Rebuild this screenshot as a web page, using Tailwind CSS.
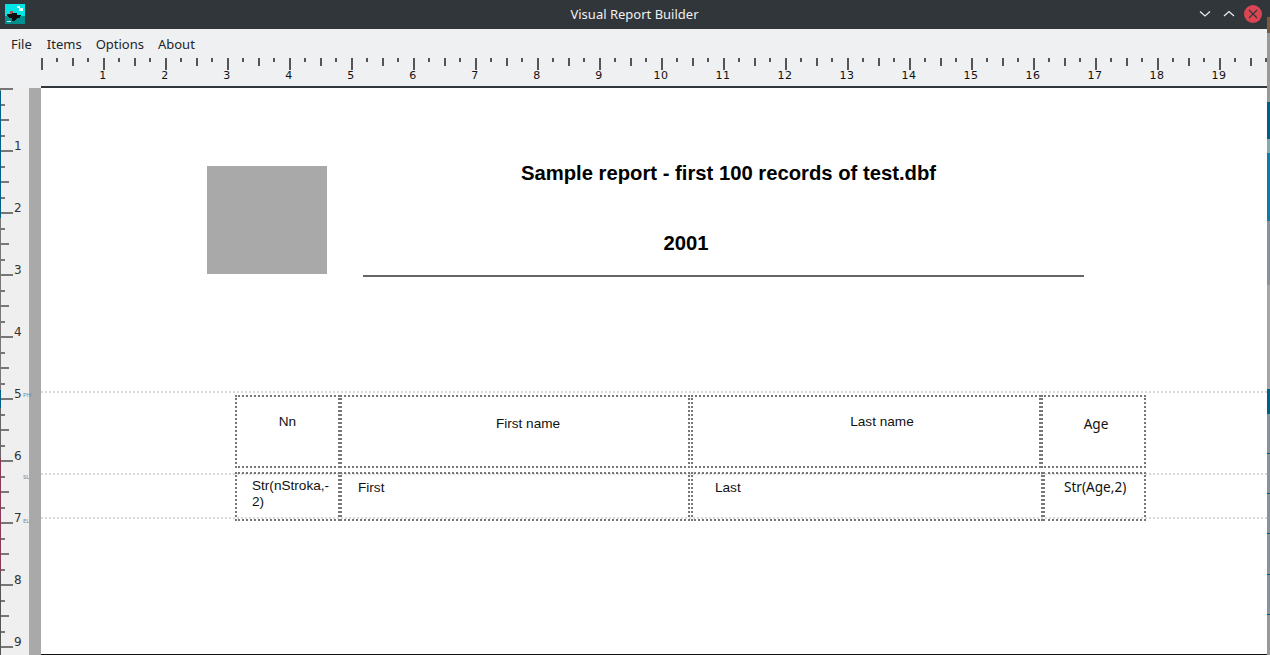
<!DOCTYPE html>
<html lang="en">
<head>
    <meta charset="UTF-8">
    <script src="https://cdn.jsdelivr.net/npm/@tailwindcss/browser@4"></script>
    <title>Visual Report Builder</title>
</head>
<body class="bg-[#31363b]">
<div class="w-[1270px] h-[655px] flex overflow-hidden font-['Noto_Sans',sans-serif]">
<div class="w-[1267px] h-[655px] shrink-0 flex flex-col">
    <!-- title bar -->
    <div class="h-[29px] shrink-0 bg-[#31363b] flex items-center relative">
        <svg class="absolute left-[5px] top-[4px]" width="20" height="20" viewBox="0 0 20 20" shape-rendering="crispEdges">
            <rect width="20" height="20" fill="#00e6e6"/>
            <rect y="12" width="20" height="8" fill="#009090"/>
            <rect x="12" y="2" width="3" height="2" fill="#e8ffff"/>
            <rect x="14" y="4" width="4" height="3" fill="#e8ffff"/>
            <rect x="2" y="17" width="4" height="1" fill="#c0f0f0"/>
            <rect x="5" y="7" width="3" height="3" fill="#b05050"/>
            <path d="M2 10h5v-1h5v2h4l-1 3h-3l-2 3h-3v-3h-3l-2-2z" fill="#101010"/>
        </svg>
        <div class="w-full text-center text-[13px] text-[#eff0f1] pl-[2px]">Visual Report Builder</div>
        <svg class="absolute left-[1199px] top-[10px]" width="12" height="8" viewBox="0 0 12 8"><path d="M1 1.5l5 4.5 5-4.5" fill="none" stroke="#eff0f1" stroke-width="1.2"/></svg>
        <svg class="absolute left-[1223px] top-[10px]" width="12" height="8" viewBox="0 0 12 8"><path d="M1 6l5-4.5L11 6" fill="none" stroke="#eff0f1" stroke-width="1.2"/></svg>
        <div class="absolute left-[1244px] top-[5px] w-[18px] h-[18px] rounded-full bg-[#da4453] flex items-center justify-center">
            <svg width="10" height="10" viewBox="0 0 10 10"><path d="M1 1l8 8M9 1l-8 8" stroke="#31363b" stroke-width="1.2"/></svg>
        </div>
    </div>

    <!-- menu bar -->
    <div class="h-[29px] shrink-0 bg-[#eff0f1] flex items-center pl-[4px] pt-[2px] text-[13px] text-[#232629]">
        <span class="pl-[7px] pr-[8px]">File</span>
        <span class="px-[7px]">Items</span>
        <span class="px-[7px]">Options</span>
        <span class="px-[7px]">About</span>
    </div>

    <!-- top ruler -->
    <div class="h-[30px] shrink-0 bg-[#eff0f1] flex">
        <div class="w-[41px] shrink-0"></div>
        <div class="flex-1 relative border-b-2 border-[#31363b]">
            <svg class="absolute left-0 top-0" width="1226" height="14">
                <defs>
                    <pattern id="hticks" width="62" height="14" patternUnits="userSpaceOnUse">
                        <rect x="0" y="0" width="2" height="12" fill="#555"/>
                        <rect x="15" y="0" width="2" height="4" fill="#555"/>
                        <rect x="31" y="0" width="2" height="8" fill="#555"/>
                        <rect x="46" y="0" width="2" height="4" fill="#555"/>
                    </pattern>
                </defs>
                <rect width="1226" height="14" fill="url(#hticks)"/>
            </svg>
            <div class="absolute left-[31px] top-[10px] flex text-[11px] tracking-[0.5px] text-[#111] font-['DejaVu_Sans',sans-serif]">
                <span class="w-[62px] text-center">1</span><span class="w-[62px] text-center">2</span><span class="w-[62px] text-center">3</span><span class="w-[62px] text-center">4</span><span class="w-[62px] text-center">5</span><span class="w-[62px] text-center">6</span><span class="w-[62px] text-center">7</span><span class="w-[62px] text-center">8</span><span class="w-[62px] text-center">9</span><span class="w-[62px] text-center">10</span><span class="w-[62px] text-center">11</span><span class="w-[62px] text-center">12</span><span class="w-[62px] text-center">13</span><span class="w-[62px] text-center">14</span><span class="w-[62px] text-center">15</span><span class="w-[62px] text-center">16</span><span class="w-[62px] text-center">17</span><span class="w-[62px] text-center">18</span><span class="w-[62px] text-center">19</span>
            </div>
        </div>
    </div>

    <div class="flex flex-1 min-h-0">
        <!-- desktop showing at the window's left edge -->
        <div class="w-px shrink-0 flex flex-col bg-[#555]">
            <div class="h-[3px] bg-[#777]"></div>
            <div class="h-[127px] bg-[#005f87]"></div>
            <div class="h-[172px] bg-[#777]"></div>
            <div class="h-[18px] bg-[#005f87]"></div>
            <div class="h-[50px] bg-[#666]"></div>
            <div class="h-[114px] bg-[#8a3a55]"></div>
        </div>
        <!-- left ruler -->
        <div class="w-[28px] shrink-0 bg-[#efefef] relative">
            <svg class="absolute left-0 top-0" width="28" height="567">
                <defs>
                    <pattern id="vticks" width="28" height="62" patternUnits="userSpaceOnUse">
                        <rect x="0" y="0" width="12" height="2" fill="#777"/>
                        <rect x="0" y="16" width="4" height="2" fill="#777"/>
                        <rect x="0" y="31" width="8" height="2" fill="#777"/>
                        <rect x="0" y="47" width="4" height="2" fill="#777"/>
                    </pattern>
                </defs>
                <rect width="28" height="567" fill="url(#vticks)"/>
            </svg>
            <div class="absolute left-[13px] top-[49px] flex flex-col text-[12px] text-[#333] font-['DejaVu_Sans',sans-serif]">
                <span class="h-[62px]">1</span><span class="h-[62px]">2</span><span class="h-[62px]">3</span><span class="h-[62px]">4</span><span class="h-[62px]">5</span><span class="h-[62px]">6</span><span class="h-[62px]">7</span><span class="h-[62px]">8</span><span class="h-[18px]">9</span>
            </div>
            <span class="absolute z-10 left-[22px] top-[303px] text-[6px] leading-[8px] text-[#6688aa]">PH</span>
            <span class="absolute z-10 left-[22px] top-[385px] text-[6px] leading-[8px] text-[#6688aa]">SL</span>
            <span class="absolute z-10 left-[22px] top-[429px] text-[6px] leading-[8px] text-[#6688aa]">EL</span>
        </div>
        <div class="w-[12px] shrink-0 bg-[#a9a9a9]"></div>

        <!-- report canvas -->
        <div class="flex-1 bg-white relative border-b border-[#111] text-[#111]">
            <div class="absolute left-[166px] top-[78px] w-[120px] h-[108px] bg-[#a9a9a9]"></div>
            <div class="absolute left-[322px] top-[70px] w-[731px] text-center text-[20.25px] font-bold text-black font-['Liberation_Sans',sans-serif]">Sample report - first 100 records of test.dbf</div>
            <div class="absolute left-[322px] top-[140px] w-[646px] text-center text-[20.25px] font-bold text-black font-['Liberation_Sans',sans-serif]">2001</div>
            <div class="absolute left-[322px] top-[187px] w-[721px] h-[2px] bg-[#666]"></div>

            <!-- band lines -->
            <div class="absolute left-0 right-0 top-[303px] border-t-2 border-dotted border-[#d8d8d8]"></div>
            <div class="absolute left-0 right-0 top-[385px] border-t-2 border-dotted border-[#d8d8d8]"></div>
            <div class="absolute left-0 right-0 top-[429px] border-t-2 border-dotted border-[#d8d8d8]"></div>

            <!-- header cells -->
            <div class="absolute left-[194px] top-[307px] w-[105px] h-[73px] border-2 border-dotted border-[#777] text-center text-[13.6px] leading-[18px] font-['Liberation_Sans',sans-serif] pt-[16px]">Nn</div>
            <div class="absolute left-[299px] top-[307px] w-[350px] h-[73px] border-2 border-dotted border-[#777] text-center text-[13.6px] leading-[18px] font-['Liberation_Sans',sans-serif] pl-[26px] pt-[18px]">First name</div>
            <div class="absolute left-[650px] top-[307px] w-[350px] h-[73px] border-2 border-dotted border-[#777] text-center text-[13.6px] leading-[18px] font-['Liberation_Sans',sans-serif] pl-[32px] pt-[16px]">Last name</div>
            <div class="absolute left-[1000px] top-[307px] w-[105px] h-[73px] border-2 border-dotted border-[#777] text-center text-[13.6px] leading-[18px] pl-[5px] pt-[18px]">Age</div>

            <!-- detail cells -->
            <div class="absolute left-[194px] top-[384px] w-[105px] h-[49px] border-2 border-dotted border-[#777] text-[13.6px] leading-[16px] font-['Liberation_Sans',sans-serif] pl-[15px] pt-[4px]">Str(nStroka,-<br>2)</div>
            <div class="absolute left-[299px] top-[384px] w-[350px] h-[49px] border-2 border-dotted border-[#777] text-[13.6px] leading-[16px] font-['Liberation_Sans',sans-serif] pl-[16px] pt-[6px]">First</div>
            <div class="absolute left-[650px] top-[384px] w-[352px] h-[49px] border-2 border-dotted border-[#777] text-[13.6px] leading-[16px] font-['Liberation_Sans',sans-serif] pl-[22px] pt-[6px]">Last</div>
            <div class="absolute left-[1002px] top-[384px] w-[103px] h-[49px] border-2 border-dotted border-[#777] text-[13.6px] leading-[18px] pl-[19px] pt-[4px]">Str(Age,2)</div>
        </div>
    </div>
</div>
<!-- desktop showing to the right of the window -->
<div class="w-[3px] shrink-0 flex flex-col bg-[#999]">
    <div class="h-[17px] bg-[#31363b]"></div>
    <div class="h-[16px] bg-[#7a5a40]"></div>
    <div class="h-[69px] bg-[#999]"></div>
    <div class="h-[37px] bg-[#005f87]"></div>
    <div class="h-[14px] bg-[#88aaaa]"></div>
    <div class="h-[68px] bg-[#1478a8]"></div>
    <div class="h-[64px] bg-[#8a929a]"></div>
    <div class="h-[104px] bg-[#a5a5a5]"></div>
    <div class="h-[25px] bg-[#005f87]"></div>
    <div class="h-[39px] bg-[#8a929a]"></div>
    <div class="h-px bg-[#005f87]"></div>
    <div class="h-[39px] bg-[#8a929a]"></div>
    <div class="h-px bg-[#005f87]"></div>
    <div class="h-[39px] bg-[#8a929a]"></div>
    <div class="h-px bg-[#005f87]"></div>
    <div class="h-[40px] bg-[#8a929a]"></div>
    <div class="h-px bg-[#005f87]"></div>
    <div class="h-[39px] bg-[#8a929a]"></div>
    <div class="h-px bg-[#005f87]"></div>
</div>
</div>
</body>
</html>
